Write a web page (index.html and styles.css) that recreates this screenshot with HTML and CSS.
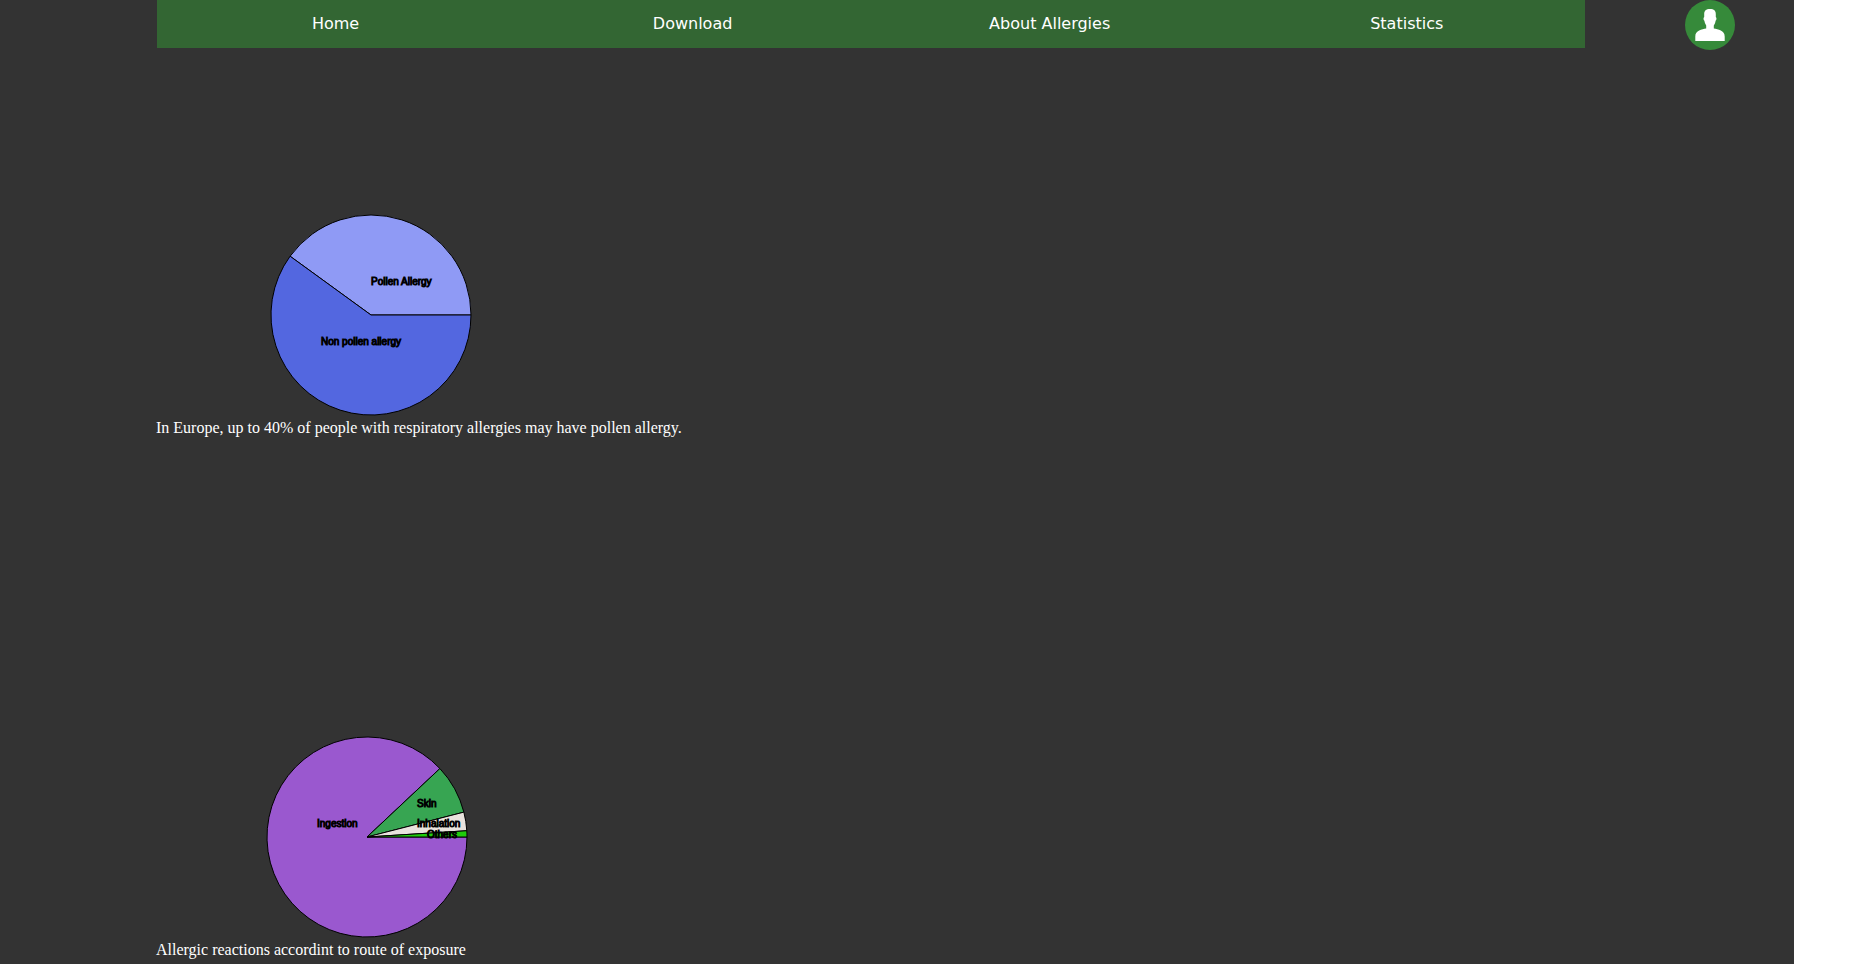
FILE: index.html
```html
<!DOCTYPE html>
<html lang="en">
<head>
<meta charset="utf-8">
<title>Statistics</title>
<link rel="stylesheet" href="styles.css">
</head>
<body>
<div class="page">
  <header class="header">
    <nav class="nav">
      <a href="#">Home</a>
      <a href="#">Download</a>
      <a href="#">About Allergies</a>
      <a href="#">Statistics</a>
    </nav>
    <a class="profile" href="#" aria-label="Profile">
      <svg width="50" height="50" viewBox="0 0 50 50">
        <circle cx="25" cy="25" r="25" fill="#368a3a"/>
        <path fill="#fff" d="M25 9C21 9 19 10.800 19.200 14.500L19.200 17C18.200 17.300 18.300 20.300 19.400 20.800C19.700 22.800 20.600 24.600 21.200 25.400V28.600C17 29.200 10.300 30.500 10.300 36.500V41H39.700V36.500C39.700 30.500 33 29.200 28.800 28.600V25.400C29.600 24.600 30.300 22.800 30.600 20.800C31.700 20.300 31.800 17.300 30.800 17L30.800 14.500C31 10.800 29 9 25 9Z"/>
      </svg>
    </a>
  </header>
  <main class="charts">
    <figure class="chart">
      <svg class="pie" width="430" height="202" viewBox="-215 -101 430 202">
        <path fill="#8f9af5" d="M0 0L100 0A100 100 0 0 0 -80.900 -58.780Z"/>
        <path fill="#5367e0" d="M0 0L-80.900 -58.780A100 100 0 1 0 100 0Z"/>
        <text x="0" y="-30">Pollen Allergy</text>
        <text x="-50" y="30">Non pollen allergy</text>
      </svg>
      <figcaption>In Europe, up to 40% of people with respiratory allergies may have pollen allergy.</figcaption>
    </figure>
    <figure class="chart">
      <svg class="pie" width="422" height="202" viewBox="-211 -101 422 202">
        <path fill="#9a58cf" d="M0 0L72.900 -68.450A100 100 0 1 0 100 0Z"/>
        <path fill="#37a552" d="M0 0L96.860 -24.870A100 100 0 0 0 72.900 -68.450Z"/>
        <path fill="#e9e3de" d="M0 0L99.800 -6.280A100 100 0 0 0 96.860 -24.870Z"/>
        <path fill="#20cc0c" d="M0 0L100 0A100 100 0 0 0 99.800 -6.280Z"/>
        <text x="-50" y="-10">Ingestion</text>
        <text x="50" y="-30">Skin</text>
        <text x="50" y="-10">Inhalation</text>
        <text x="60" y="1">Others</text>
      </svg>
      <figcaption>Allergic reactions accordint to route of exposure</figcaption>
    </figure>
  </main>
</div>
</body>
</html>
```
FILE: styles.css
```css
* { box-sizing: border-box; }
body { margin: 0; background: #fff; font-family: "Liberation Serif", "Times New Roman", serif; font-size: 16px; }
.page { width: 95.9%; min-height: 100vh; background: #333; color: #fff; }
.header { display: flex; justify-content: space-between; align-items: flex-start; padding-left: 157px; padding-right: 59px; }
.nav { display: grid; grid-template-columns: repeat(4, 1fr); flex: 1; margin-right: 100px; background: #336633; }
.nav a { padding: 12px 0; line-height: 24px; text-align: center; color: #fff; text-decoration: none; font-family: "DejaVu Sans", Verdana, sans-serif; }
.profile { display: block; height: 50px; }
.profile svg, .pie { display: block; }
.charts { padding: 164px 0 0 156px; }
.chart { margin: 0 0 298px; }
.chart:last-child { margin-bottom: 0; }
.chart figcaption { line-height: 20px; padding-top: 2px; }
.pie path, .pie text { stroke: #000; stroke-width: 1px; }
.pie text { font: 10px "Liberation Sans", Arial, sans-serif; }
```
